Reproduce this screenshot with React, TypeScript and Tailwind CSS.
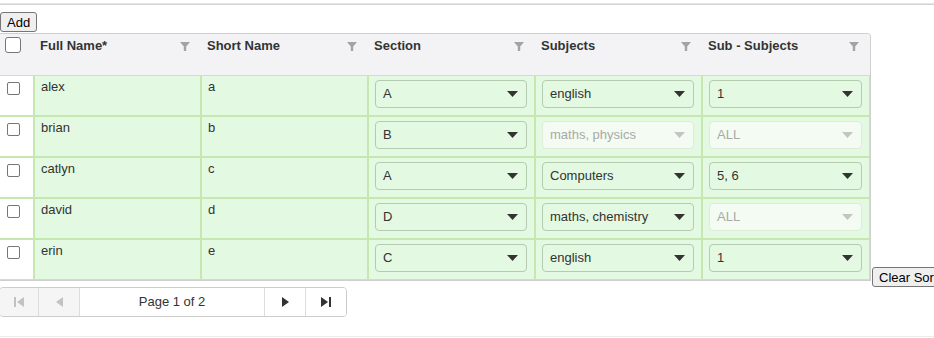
import React from "react";

type Row = {
  name: string;
  short: string;
  section: string;
  subjects: string;
  subSubjects: string;
  locked?: boolean;
  subLocked?: boolean;
};

const rows: Row[] = [
  { name: "alex", short: "a", section: "A", subjects: "english", subSubjects: "1" },
  { name: "brian", short: "b", section: "B", subjects: "maths, physics", subSubjects: "ALL", locked: true, subLocked: true },
  { name: "catlyn", short: "c", section: "A", subjects: "Computers", subSubjects: "5, 6" },
  { name: "david", short: "d", section: "D", subjects: "maths, chemistry", subSubjects: "ALL", subLocked: true },
  { name: "erin", short: "e", section: "C", subjects: "english", subSubjects: "1" },
];

const columns = ["Full Name*", "Short Name", "Section", "Subjects", "Sub - Subjects"];

const gridCols = "grid grid-cols-[34px_167px_167px_167px_167px_168px]";

function FilterIcon() {
  return (
    <svg width="10" height="9" viewBox="0 0 10 9" className="shrink-0 mt-[4px]">
      <path d="M0 0h10L6.2 4.6V9H3.8V4.6z" fill="#a3a3a3" />
    </svg>
  );
}

function Caret({ muted }: { muted?: boolean }) {
  return (
    <svg width="11" height="6" viewBox="0 0 11 6" className="shrink-0">
      <path d="M0 0h11L5.5 6z" fill={muted ? "#c4c4c4" : "#333333"} />
    </svg>
  );
}

function Select({ value, disabled }: { value: string; disabled?: boolean }) {
  return (
    <div
      className={`flex h-[28px] items-center justify-between rounded-[4px] border pl-[7px] pr-[8px] text-[13px] ${
        disabled ? "border-[#dcecd8] bg-[#f3fbf2] text-[#a9a9a9]" : "border-[#b4cbb0] bg-[#e3f9e1] text-[#333]"
      }`}
    >
      <span>{value}</span>
      <Caret muted={disabled} />
    </div>
  );
}

function Checkbox({ big }: { big?: boolean }) {
  return (
    <div
      className={`border border-[#767676] bg-white ${
        big ? "h-[16px] w-[16px] rounded-[3px]" : "h-[13px] w-[13px] rounded-[2px]"
      }`}
    />
  );
}

function NativeButton({ children, className = "" }: { children: React.ReactNode; className?: string }) {
  return (
    <button className={`h-[20px] shrink-0 whitespace-nowrap rounded-[3px] border border-[#767676] bg-[#efefef] px-[6px] text-[13px] leading-none text-black ${className}`}>
      {children}
    </button>
  );
}

function Pager() {
  return (
    <div className="ml-[-1px] mt-[6px] flex h-[30px] w-[348px] overflow-hidden rounded-[4px] border border-[#cccccc] text-[13px] text-[#333]">
      <div className="flex w-[39px] items-center justify-center border-r border-[#dddddd] bg-[#f5f5f5]">
        <svg width="10" height="10" viewBox="0 0 10 10">
          <rect x="0" y="0" width="2" height="10" fill="#c2c2c2" />
          <path d="M10 0v10L3 5z" fill="#c2c2c2" />
        </svg>
      </div>
      <div className="flex w-[41px] items-center justify-center border-r border-[#dddddd] bg-[#f5f5f5]">
        <svg width="7" height="10" viewBox="0 0 7 10">
          <path d="M7 0v10L0 5z" fill="#c2c2c2" />
        </svg>
      </div>
      <div className="flex flex-1 items-center justify-center border-r border-[#dddddd] bg-white">Page 1 of 2</div>
      <div className="flex w-[41px] items-center justify-center border-r border-[#dddddd] bg-white">
        <svg width="7" height="10" viewBox="0 0 7 10">
          <path d="M0 0v10L7 5z" fill="#333333" />
        </svg>
      </div>
      <div className="flex w-[40px] items-center justify-center bg-white">
        <svg width="10" height="10" viewBox="0 0 10 10">
          <path d="M0 0v10L7 5z" fill="#333333" />
          <rect x="8" y="0" width="2" height="10" fill="#333333" />
        </svg>
      </div>
    </div>
  );
}

export default function App() {
  return (
    <div className="h-[338px] w-[934px] overflow-hidden bg-white font-['Liberation_Sans',Arial,sans-serif] text-[13px] text-[#333]">
      {/* top rule */}
      <div className="mt-[3px] h-px bg-[#e6e6e6]" />
      <div className="h-px bg-[#d3d3d3]" />

      <div className="mt-[7px] flex h-[21px] items-start">
        <NativeButton>Add</NativeButton>
      </div>

      <div className="flex items-end">
        {/* Grid */}
        <div className="w-[871px] shrink-0 overflow-hidden rounded-tr-[4px] border-y border-r border-[#cfcfcf]">
          {/* Header */}
          <div className={`${gridCols} h-[41px] bg-[#f3f3f5]`}>
            <div className="pl-[5px] pt-[3px]">
              <Checkbox big />
            </div>
            {columns.map((c) => (
              <div key={c} className="flex items-start justify-between pl-[6px] pr-[11px] pt-[4px]">
                <span className="font-bold leading-[15px]">{c}</span>
                <FilterIcon />
              </div>
            ))}
          </div>

          {/* Rows */}
          {rows.map((r) => (
            <div key={r.name} className={`${gridCols} h-[41px]`}>
              <div className="border-y border-r border-[#c6e7b0] bg-white pl-[7px] pt-[6px]">
                <Checkbox />
              </div>
              <div className="border border-[#c6e7b0] bg-[#e3f9e1] pl-[6px] pt-[3px] leading-[15px]">{r.name}</div>
              <div className="border border-[#c6e7b0] bg-[#e3f9e1] pl-[6px] pt-[3px] leading-[15px]">{r.short}</div>
              <div className="border border-[#c6e7b0] bg-[#e3f9e1] pl-[6px] pr-[7px] pt-[4px]">
                <Select value={r.section} />
              </div>
              <div className="border border-[#c6e7b0] bg-[#e3f9e1] pl-[6px] pr-[7px] pt-[4px]">
                <Select value={r.subjects} disabled={r.locked} />
              </div>
              <div className="border border-[#c6e7b0] bg-[#e3f9e1] pl-[6px] pr-[7px] pt-[4px]">
                <Select value={r.subSubjects} disabled={r.subLocked} />
              </div>
            </div>
          ))}
        </div>

        <NativeButton className="mb-[-6px] ml-px">Clear Sort</NativeButton>
      </div>

      <Pager />

      <div className="mt-[19px] h-px bg-[#ececec]" />
    </div>
  );
}
